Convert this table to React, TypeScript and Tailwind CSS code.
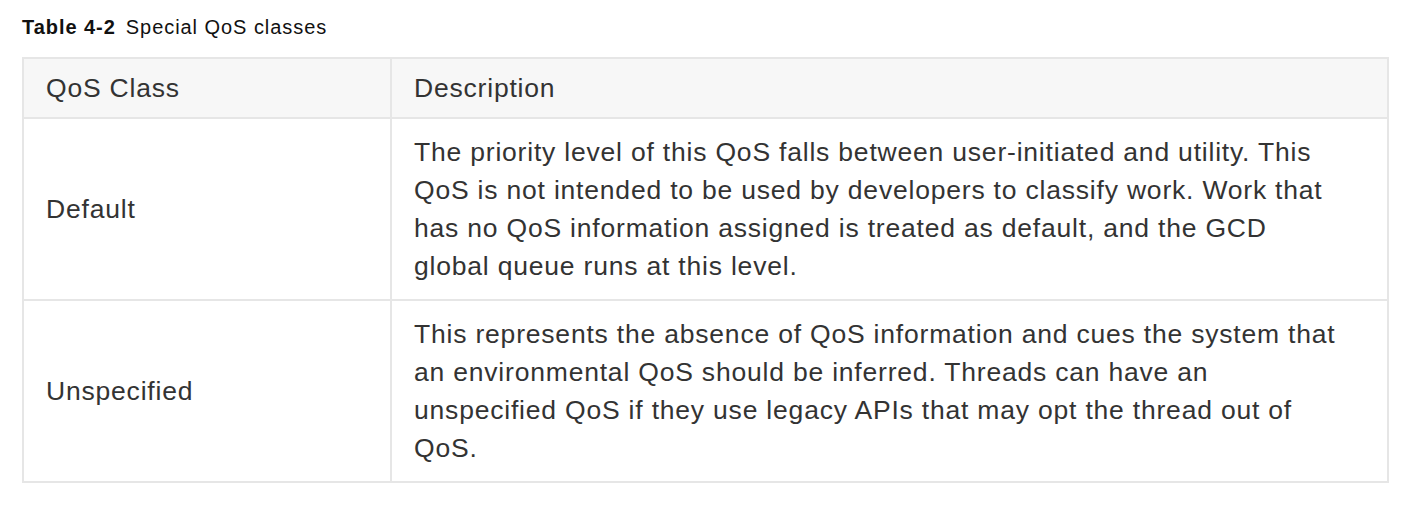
const rows = [
  {
    name: "Default",
    desc: "The priority level of this QoS falls between user-initiated and utility. This QoS is not intended to be used by developers to classify work. Work that has no QoS information assigned is treated as default, and the GCD global queue runs at this level.",
  },
  {
    name: "Unspecified",
    desc: "This represents the absence of QoS information and cues the system that an environmental QoS should be inferred. Threads can have an unspecified QoS if they use legacy APIs that may opt the thread out of QoS.",
  },
];

export default function App() {
  return (
    <div
      className="min-h-[508px] bg-white pl-[22px] pr-[25px] pt-[14px]"
      style={{ fontFamily: '"Liberation Sans", Arial, sans-serif' }}
    >
      {/* Caption */}
      <div className="flex h-[26px] items-center text-[20px] tracking-[0.95px] text-[#111]">
        <span className="font-bold">Table 4-2</span>
        <span className="ml-[10px]">Special QoS classes</span>
      </div>

      {/* Table */}
      <table className="mt-[17px] w-full border-collapse text-[26.5px] leading-[38px] tracking-[0.8px] text-[#333]">
        <thead>
          <tr className="bg-[#f7f7f7]">
            <th className="w-[368px] border-2 border-[#e6e6e6] px-[22px] py-[10px] text-left font-normal">
              QoS Class
            </th>
            <th className="border-2 border-[#e6e6e6] px-[22px] py-[10px] text-left font-normal">
              Description
            </th>
          </tr>
        </thead>
        <tbody>
          {rows.map((r) => (
            <tr key={r.name}>
              <td className="border-2 border-[#e6e6e6] px-[22px] py-[14px] align-middle">{r.name}</td>
              <td className="border-2 border-[#e6e6e6] py-[14px] pl-[22px] pr-[48px]">{r.desc}</td>
            </tr>
          ))}
        </tbody>
      </table>
    </div>
  );
}
